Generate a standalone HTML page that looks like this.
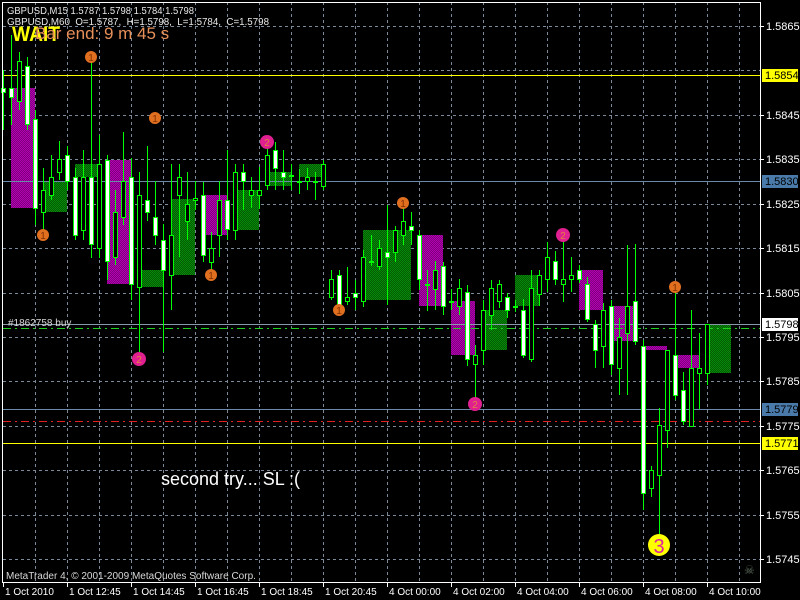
<!DOCTYPE html>
<html><head><meta charset="utf-8"><style>
html,body{margin:0;padding:0;background:#000;width:800px;height:600px;overflow:hidden}
svg{display:block}
text{font-family:"Liberation Sans",sans-serif}
</style></head><body>
<svg id="s" width="800" height="600" xmlns="http://www.w3.org/2000/svg">
<defs>
<pattern id="mg" width="2" height="2" patternUnits="userSpaceOnUse"><rect width="2" height="2" fill="#800080"/><rect width="1" height="1" fill="#b000b0"/><rect x="1" y="1" width="1" height="1" fill="#b000b0"/></pattern>
<pattern id="gr" width="2" height="2" patternUnits="userSpaceOnUse"><rect width="2" height="2" fill="#005a00"/><rect width="1" height="1" fill="#0a8a0a"/><rect x="1" y="1" width="1" height="1" fill="#0a8a0a"/></pattern>
</defs>
<g id="g"></g>
</svg>
<script>
var o='';
var hy=[26,70,115,159,204,248,293,337,381,426,470,515,559];
hy.forEach(function(y){o+='<line x1="3" y1="'+(y+.5)+'" x2="760" y2="'+(y+.5)+'" stroke="#7a8a9a" stroke-dasharray="3,3"/>';});
for(var x=35;x<760;x+=32)o+='<line x1="'+(x+.5)+'" y1="2" x2="'+(x+.5)+'" y2="582" stroke="#7a8a9a" stroke-dasharray="3,3"/>';
var mg=[[11,88,24,120],[107,160,24,124],[203,195,24,40],[419,235,24,71],[451,301,24,54],[579,270,24,40],[611,306,22,35],[643,346,24,4],[675,355,24,13]];
var gr=[[43,181,24,31],[75,164,24,13],[139,270,24,17],[171,199,24,76],[235,190,24,40],[267,172,24,14],[299,164,24,13],[363,230,48,70],[483,310,24,40],[515,275,24,31],[707,325,24,48]];
mg.forEach(function(b){o+='<rect x="'+b[0]+'" y="'+b[1]+'" width="'+b[2]+'" height="'+b[3]+'" fill="url(#mg)"/>';});
gr.forEach(function(b){o+='<rect x="'+b[0]+'" y="'+b[1]+'" width="'+b[2]+'" height="'+b[3]+'" fill="url(#gr)"/>';});
o+='<line x1="3" y1="75.5" x2="760" y2="75.5" stroke="#ffff00"/>';
o+='<line x1="3" y1="181.5" x2="760" y2="181.5" stroke="#6a8aaa"/>';
o+='<line x1="3" y1="324.5" x2="760" y2="324.5" stroke="#8899aa"/>';
o+='<line x1="3" y1="328.5" x2="760" y2="328.5" stroke="#20d020" stroke-dasharray="8,4,2,4"/>';
o+='<line x1="3" y1="409.5" x2="760" y2="409.5" stroke="#6a8aaa"/>';
o+='<line x1="3" y1="421.5" x2="760" y2="421.5" stroke="#e02020" stroke-dasharray="8,4,2,4"/>';
o+='<line x1="3" y1="443.5" x2="760" y2="443.5" stroke="#ffff00"/>';
var c=[[3,88,92,70,130,1],[11,88,97,35,125,1],[19,61,101,52,110,0],[27,66,124,57,130,1],[35,119,208,110,225,1],[43,190,212,168,235,0],[51,177,195,155,200,0],[59,159,172,141,180,0],[67,155,181,146,190,1],[75,177,235,168,240,1],[83,177,230,150,240,0],[91,177,244,57,258,1],[99,164,248,135,258,0],[107,160,261,155,280,1],[115,212,257,190,265,0],[123,181,217,132,225,0],[131,177,284,158,300,1],[139,195,287,172,360,0],[147,200,212,146,221,1],[155,217,235,181,245,1],[163,240,270,224,352,1],[171,235,275,164,310,0],[179,177,195,164,257,0],[187,204,221,172,240,0],[195,198,200,181,210,0],[203,195,255,182,262,1],[211,248,262,232,275,0],[219,200,235,181,257,0],[227,200,229,150,240,1],[235,172,230,164,240,0],[243,172,181,164,210,1],[251,190,195,177,208,0],[259,190,195,167,209,0],[267,155,185,140,190,0],[275,150,168,142,190,1],[283,172,177,150,190,1],[291,175,176,164,190,0],[299,181,182,169,194,0],[307,177,181,168,190,0],[315,181,182,172,200,0],[323,164,186,160,190,0],
[331,279,297,270,300,0],[339,275,306,270,310,1],[347,297,301,267,305,0],[355,293,297,280,310,1],[363,257,301,250,307,0],[371,261,262,235,266,0],[379,248,266,240,270,0],[387,252,257,205,305,1],[395,230,252,226,262,0],[403,221,235,206,245,0],[411,226,230,212,245,1],[419,235,279,230,290,1],[427,284,285,270,311,0],[435,270,289,261,310,0],[443,266,306,262,315,1],[451,301,302,289,310,0],[459,288,306,279,315,0],[467,292,359,285,366,1],[475,355,364,345,405,0],[483,310,350,300,365,0],[491,288,315,280,330,0],[499,284,301,280,308,0],[507,297,310,293,318,1],[515,306,307,300,312,0],[523,310,355,299,358,1],[531,288,359,270,362,0],[539,275,294,270,306,0],[547,257,279,242,292,0],[555,261,279,251,285,1],[563,279,284,235,302,0],[571,275,279,257,292,0],[579,270,279,265,283,1],[587,284,319,277,322,1],[595,324,350,320,368,1],[603,310,346,303,368,0],[611,306,364,300,375,1],[619,337,368,318,395,0],[627,306,333,245,395,0],[635,301,341,244,345,1],[643,346,493,340,510,1],[651,470,488,466,497,0],[659,425,475,408,535,0],[667,350,430,350,448,0],[675,355,395,290,400,1],[683,390,421,372,425,1],[691,368,426,310,426,0],[699,368,373,333,409,0],[707,324,373,324,385,0]];
c.forEach(function(k){var x=k[0];
o+='<line x1="'+(x+.5)+'" y1="'+k[3]+'" x2="'+(x+.5)+'" y2="'+k[4]+'" stroke="#00ff00"/>';
var h=Math.max(1,k[2]-k[1]);
o+='<rect x="'+(x-1.5)+'" y="'+(k[1]+.5)+'" width="4" height="'+h+'" fill="'+(k[5]?'#fff':'#000')+'" stroke="#00ff00"/>';});
[[91,57],[155,118],[43,235],[211,275],[339,310],[403,203],[675,287]].forEach(function(p){o+='<circle cx="'+p[0]+'" cy="'+p[1]+'" r="6" fill="#e07020"/><text x="'+p[0]+'" y="'+(p[1]+4)+'" font-size="10" fill="#803000" text-anchor="middle">1</text>';});
[[267,142],[139,359],[475,404],[563,235]].forEach(function(p){o+='<circle cx="'+p[0]+'" cy="'+p[1]+'" r="7" fill="#e02090"/><text x="'+p[0]+'" y="'+(p[1]+4)+'" font-size="10" fill="#e08040" text-anchor="middle">2</text>';});
o+='<circle cx="659" cy="545" r="11" fill="#ffff00"/><text x="659" y="553" font-size="20" fill="#e020a0" text-anchor="middle">3</text>';
o+='<rect x="2.5" y="2.5" width="758" height="580" fill="none" stroke="#fff"/>';
o+='<text x="7" y="14" font-size="10" fill="#e8e8e8" textLength="187" lengthAdjust="spacingAndGlyphs">GBPUSD,M15  1.5787 1.5798 1.5784 1.5798</text>';
o+='<text x="7" y="25" font-size="10" fill="#e8e8e8" textLength="262" lengthAdjust="spacingAndGlyphs" xml:space="preserve">GBPUSD,M60  O=1.5787,  H=1.5798,  L=1.5784,  C=1.5798</text>';
o+='<text x="12" y="41" font-size="21" font-weight="bold" fill="#ffff00" textLength="48" lengthAdjust="spacingAndGlyphs">WAIT</text>';
o+='<text x="35" y="39" font-size="17" fill="#e8905a">Bar end: 9 m 45 s</text>';
o+='<text x="8" y="326" font-size="10" fill="#d8d8d8">#1862758 buy</text>';
o+='<text x="161" y="485" font-size="18" fill="#fff">second try... SL :(</text>';
o+='<text x="6" y="579" font-size="10" fill="#d8d8d8">MetaTrader 4, © 2001-2009 MetaQuotes Software Corp.</text>';
o+='<text x="744" y="574" font-size="12" fill="#607060">☠</text>';
[[26,'1.5865'],[115,'1.5845'],[159,'1.5835'],[204,'1.5825'],[248,'1.5815'],[293,'1.5805'],[337,'1.5795'],[381,'1.5785'],[426,'1.5775'],[470,'1.5765'],[515,'1.5755'],[559,'1.5745']].forEach(function(p){
o+='<line x1="761" y1="'+(p[0]+.5)+'" x2="764" y2="'+(p[0]+.5)+'" stroke="#fff"/><text x="766" y="'+(p[0]+4)+'" font-size="11" fill="#fff">'+p[1]+'</text>';});
[[75,'1.5854','#ffff00','#000'],[181,'1.5830','#4a7aaa','#000'],[324,'1.5798','#fff','#000'],[409,'1.5779','#4a7aaa','#000'],[443,'1.5771','#ffff00','#000']].forEach(function(p){
o+='<rect x="762" y="'+(p[0]-6)+'" width="36" height="13" fill="'+p[2]+'"/><text x="765" y="'+(p[0]+4)+'" font-size="11" fill="'+p[3]+'">'+p[1]+'</text>';});
[[3,'1 Oct 2010'],[67,'1 Oct 12:45'],[131,'1 Oct 14:45'],[195,'1 Oct 16:45'],[259,'1 Oct 18:45'],[323,'1 Oct 20:45'],[387,'4 Oct 00:00'],[451,'4 Oct 02:00'],[515,'4 Oct 04:00'],[579,'4 Oct 06:00'],[643,'4 Oct 08:00'],[707,'4 Oct 10:00']].forEach(function(p){
o+='<line x1="'+(p[0]+.5)+'" y1="582" x2="'+(p[0]+.5)+'" y2="587" stroke="#fff"/><text x="'+(p[0]+2)+'" y="595" font-size="10" fill="#fff">'+p[1]+'</text>';});
document.getElementById('g').innerHTML=o;
</script>
</body></html>
